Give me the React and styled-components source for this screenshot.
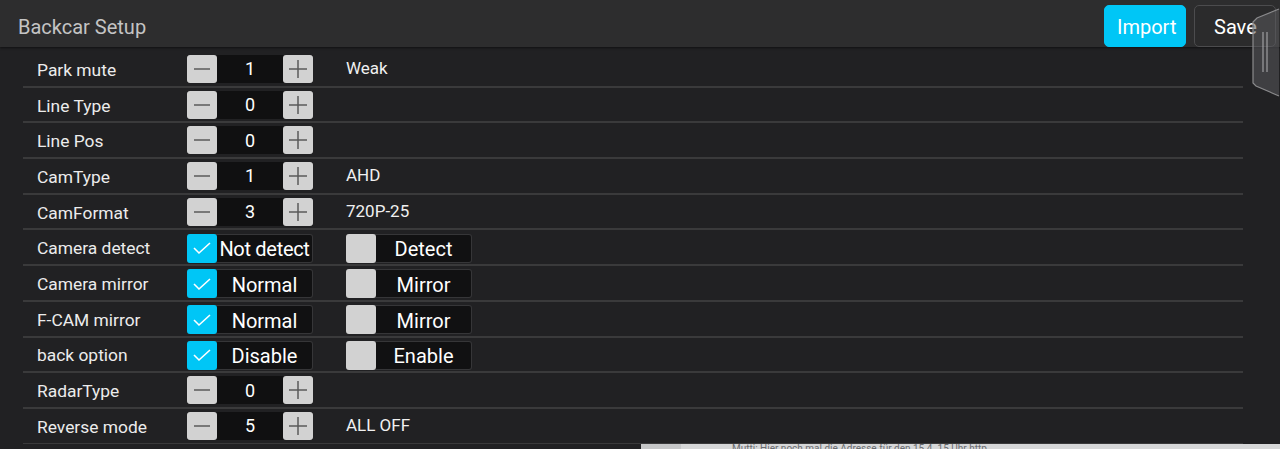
import styled, { createGlobalStyle } from 'styled-components'

const GlobalStyle = createGlobalStyle`
  body {
    margin: 0;
    background: #212123;
    font-family: Roboto, "Noto Sans", sans-serif;
    overflow: hidden;
  }
`;

const Page = styled.div`
  width: 1280px;
  height: 449px;
  position: relative;
  display: flex;
  flex-direction: column;
  background: #212123;
  overflow: hidden;
`;

const Header = styled.div`
  height: 47px;
  flex: none;
  background: #2d2d2e;
  display: flex;
  align-items: center;
  justify-content: space-between;
  padding: 0 0 0 18px;
  box-shadow: 0 1px 2px rgba(0, 0, 0, 0.5);
`;

const Title = styled.div`
  font-size: 20px;
  color: #c4c4c4;
  padding-top: 7px;
`;

const Actions = styled.div`
  display: flex;
  gap: 8px;
  align-self: flex-start;
  padding-top: 5px;
  margin-right: 4px;
`;

const Button = styled.div`
  width: 82px;
  height: 42px;
  box-sizing: border-box;
  border-radius: 5px;
  display: flex;
  align-items: center;
  padding-left: ${p => (p.$primary ? '12px' : '19px')};
  padding-top: 1px;
  font-size: 20px;
  color: #fff;
  background: ${p => (p.$primary ? '#00c6f6' : '#2b2b2c')};
  border: 1px solid ${p => (p.$primary ? '#00c6f6' : '#4c4c4e')};
`;

const Handle = styled.svg`
  position: absolute;
  right: 0;
  top: 8px;
`;

const List = styled.div`
  margin: 5px 37px 0 23px;
`;

const Row = styled.div`
  height: 35.7px;
  box-sizing: border-box;
  border-bottom: 2px solid #3a3a3b;
  display: flex;
  align-items: center;
  padding-left: 14px;
`;

const Label = styled.div`
  width: 150px;
  font-size: 17.4px;
  color: #ececec;
  padding-top: 2px;
`;

const Stepper = styled.div`
  width: 126px;
  height: 28px;
  display: flex;
  background: #101011;
`;

const StepBtn = styled.div`
  width: 30px;
  height: 28px;
  background: #d2d2d2;
  border-radius: 3px;
  display: flex;
  align-items: center;
  justify-content: center;
`;

const StepValue = styled.div`
  flex: 1;
  display: flex;
  align-items: center;
  justify-content: center;
  font-size: 18px;
  color: #fff;
`;

const Extra = styled.div`
  margin-left: 33px;
  font-size: 17px;
  color: #f0f0f0;
  align-self: flex-start;
  padding-top: 6px;
`;

const Options = styled.div`
  display: flex;
  gap: 33px;
  padding-top: 2px;
`;

const Option = styled.div`
  width: 126px;
  height: 29px;
  box-sizing: border-box;
  display: flex;
  background: #111112;
  border: 1px solid #363638;
  border-left: none;
  border-radius: 3px;
`;

const Box = styled.div`
  width: 30px;
  height: 29px;
  margin-top: -1px;
  flex: none;
  border-radius: 3px;
  background: ${p => (p.$on ? '#00c6f6' : '#d2d2d2')};
  display: flex;
  align-items: center;
  justify-content: center;
`;

const OptText = styled.div`
  flex: 1;
  display: flex;
  align-items: center;
  justify-content: center;
  padding-top: 2px;
  font-size: 20px;
  color: #fff;
  white-space: nowrap;
  letter-spacing: ${p => (p.$tight ? '-0.3px' : '0')};
`;

const Bottom = styled.div`
  flex: 1;
  display: flex;
  margin-top: -1px;
`;

const BottomDark = styled.div`
  width: 641px;
  background: #212123;
`;

const BottomLight = styled.div`
  flex: 1;
  background: linear-gradient(to right, #c6c7c8 0, #c6c7c8 40px, #d6d7d8 40px);
  overflow: hidden;
  padding-left: 91px;
  font-size: 10px;
  line-height: 10px;
  color: #6a6c70;
  white-space: nowrap;
`;

const Minus = () => (
  <svg width="18" height="4" viewBox="0 0 18 4">
    <line x1="1" y1="2" x2="17" y2="2" stroke="#5a5a5a" strokeWidth="1.5" />
  </svg>
);

const Plus = () => (
  <svg width="18" height="18" viewBox="0 0 18 18">
    <line x1="0" y1="9" x2="18" y2="9" stroke="#5a5a5a" strokeWidth="1.5" />
    <line x1="9" y1="0" x2="9" y2="18" stroke="#5a5a5a" strokeWidth="1.5" />
  </svg>
);

const Check = () => (
  <svg width="20" height="14" viewBox="0 0 20 14">
    <polyline points="2,7 7,12 18,2" fill="none" stroke="#fff" strokeWidth="1.6" />
  </svg>
);

const rows = [
  { label: 'Park mute', type: 'step', value: 1, extra: 'Weak' },
  { label: 'Line Type', type: 'step', value: 0 },
  { label: 'Line Pos', type: 'step', value: 0 },
  { label: 'CamType', type: 'step', value: 1, extra: 'AHD' },
  { label: 'CamFormat', type: 'step', value: 3, extra: '720P-25' },
  { label: 'Camera detect', type: 'opt', a: 'Not detect', b: 'Detect' },
  { label: 'Camera mirror', type: 'opt', a: 'Normal', b: 'Mirror' },
  { label: 'F-CAM mirror', type: 'opt', a: 'Normal', b: 'Mirror' },
  { label: 'back option', type: 'opt', a: 'Disable', b: 'Enable' },
  { label: 'RadarType', type: 'step', value: 0 },
  { label: 'Reverse mode', type: 'step', value: 5, extra: 'ALL OFF' },
];

function SetupRow({ row }) {
  return (
    <Row>
      <Label>{row.label}</Label>
      {row.type === 'step' ? (
        <>
          <Stepper>
            <StepBtn><Minus /></StepBtn>
            <StepValue>{row.value}</StepValue>
            <StepBtn><Plus /></StepBtn>
          </Stepper>
          {row.extra && <Extra>{row.extra}</Extra>}
        </>
      ) : (
        <Options>
          <Option>
            <Box $on><Check /></Box>
            <OptText $tight={row.a.length > 8}>{row.a}</OptText>
          </Option>
          <Option>
            <Box />
            <OptText>{row.b}</OptText>
          </Option>
        </Options>
      )}
    </Row>
  );
}

export default function App() {
  return (
    <Page>
      <GlobalStyle />
      <Header>
        <Title>Backcar Setup</Title>
        <Actions>
          <Button $primary>Import</Button>
          <Button>Save</Button>
        </Actions>
      </Header>
      <List>
        {rows.map(r => <SetupRow key={r.label} row={r} />)}
      </List>
      <Bottom>
        <BottomDark />
        <BottomLight>Mutti: Hier noch mal die Adresse für den 15.4. 15 Uhr http</BottomLight>
      </Bottom>
      <Handle width="28" height="90" viewBox="0 0 28 90">
        <path d="M27 1 L5 10 L1 14 L1 75 L4 78 L27 88" fill="rgba(90,90,92,0.55)" stroke="#8a8a8c" strokeWidth="1.2" />
        <line x1="11" y1="24" x2="11" y2="64" stroke="#b0b0b2" strokeWidth="1" />
        <line x1="15" y1="24" x2="15" y2="64" stroke="#b0b0b2" strokeWidth="1" />
      </Handle>
    </Page>
  );
}
